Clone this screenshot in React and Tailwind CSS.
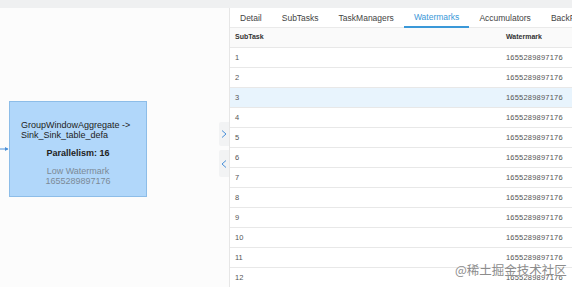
import React from "react";

const tabs = ["Detail", "SubTasks", "TaskManagers", "Watermarks", "Accumulators", "BackPressure"];
const rows = Array.from({ length: 12 }, (_, i) => i + 1);

export default function App() {
  return (
    <div
      className="w-[572px] h-[287px] overflow-hidden flex flex-col bg-white relative"
      style={{ fontFamily: '"Liberation Sans", "Noto Sans", sans-serif' }}
    >
      <div className="h-[8px] bg-[#eff0f1] shrink-0" />
      <div className="flex flex-1 min-h-0">
        <div className="w-[229px] shrink-0 relative bg-[#fcfcfc]">
          {/* incoming edge arrow */}
          <svg className="absolute left-0 top-[138px]" width="9" height="6" viewBox="0 0 9 6">
            <line x1="0" y1="3" x2="8" y2="3" stroke="#4a90d9" strokeWidth="1" />
            <path d="M5 1 L8.5 3 L5 5 Z" fill="#4a90d9" />
          </svg>
          {/* node */}
          <div className="absolute left-[9px] top-[93px] w-[138px] h-[96px] bg-[#b1d7fa] border border-[#8dbde8] flex flex-col pt-[18px]">
            <div className="pl-[11px] text-[9px] leading-[10px] text-[#222]">
              <div>GroupWindowAggregate -&gt;</div>
              <div>Sink_Sink_table_defa</div>
            </div>
            <div className="mt-[8px] text-center text-[9px] leading-[10px] font-bold text-[#222]">Parallelism: 16</div>
            <div className="mt-[8px] text-center text-[9px] leading-[10px] text-[#7c8a97]">
              <div>Low Watermark</div>
              <div>1655289897176</div>
            </div>
          </div>
          {/* collapse toggles */}
          <div className="absolute right-0 top-[114px] w-[10px] h-[24px] bg-[#f2f3f4] rounded-l-[2px] flex items-center justify-center">
            <svg width="6" height="8" viewBox="0 0 6 8">
              <path d="M1 0.5 L5 4 L1 7.5" fill="none" stroke="#4a90d9" strokeWidth="1" />
            </svg>
          </div>
          <div className="absolute right-0 top-[142px] w-[10px] h-[27px] bg-[#f2f3f4] rounded-l-[2px] flex items-center justify-center">
            <svg width="6" height="8" viewBox="0 0 6 8">
              <path d="M5 0.5 L1 4 L5 7.5" fill="none" stroke="#4a90d9" strokeWidth="1" />
            </svg>
          </div>
        </div>
        <div className="flex-1 min-w-0 flex flex-col border-l border-[#e6e6e6] overflow-hidden">
          <div className="h-[20px] shrink-0 flex whitespace-nowrap border-b border-[#eaeaea] bg-white">
            {tabs.map((t) => (
              <div
                key={t}
                className={
                  "px-[10px] h-[20px] flex items-center text-[8.5px] shrink-0 " +
                  (t === "Watermarks"
                    ? "text-[#3a98d8] border-b-2 border-[#3a98d8]"
                    : "text-[#444]")
                }
              >
                {t}
              </div>
            ))}
          </div>
          <div className="flex h-[20px] shrink-0 items-center bg-[#fafafa] border-b border-[#e8e8e8] text-[7px] font-bold text-[#333]">
            <div className="w-[276px] pl-[5px]">SubTask</div>
            <div className="flex-1">Watermark</div>
          </div>
          {rows.map((r) => (
            <div
              key={r}
              className={
                "flex h-[20px] shrink-0 items-center border-b border-[#e8e8e8] text-[7.5px] text-[#555] " +
                (r === 3 ? "bg-[#e8f4fd]" : "bg-white")
              }
            >
              <div className="w-[276px] pl-[5px]">{r}</div>
              <div className="flex-1 tracking-[0.2px]">1655289897176</div>
            </div>
          ))}
        </div>
      </div>
      <div
        className="absolute left-[455px] top-[262px] text-[12.5px] leading-[16px] text-[#8c8c8c] whitespace-nowrap"
        style={{ fontFamily: '"Noto Sans CJK SC", sans-serif', textShadow: "0 0 1px #fff" }}
      >
        @稀土掘金技术社区
      </div>
    </div>
  );
}
